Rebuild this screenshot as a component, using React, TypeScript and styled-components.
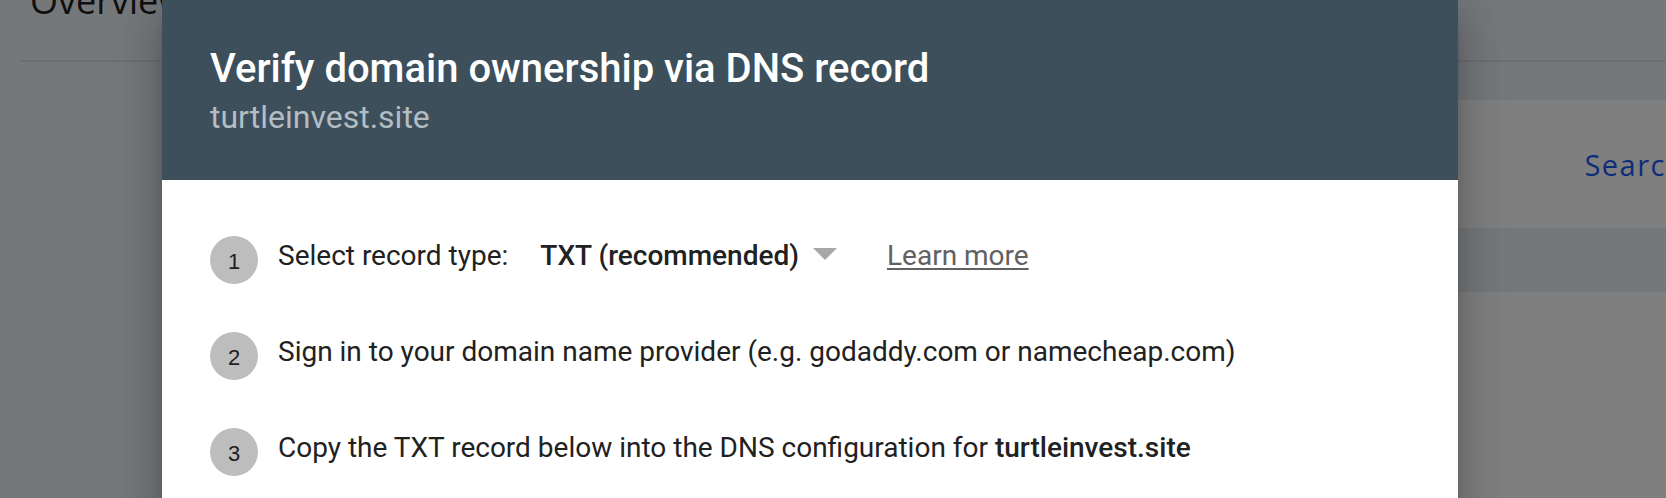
import React from "react";
import styled, { createGlobalStyle } from "styled-components";

const GlobalStyle = createGlobalStyle`
  html, body {
    margin: 0;
    padding: 0;
    width: 1666px;
    height: 498px;
    overflow: hidden;
    background: #eaf0f6;
  }
  * { box-sizing: border-box; }
`;

const Page = styled.div`
  position: relative;
  width: 1666px;
  height: 498px;
  overflow: hidden;
  background: #eaf0f6;
  font-family: "Open Sans", Roboto, sans-serif;
`;

const PageHeader = styled.header`
  display: flow-root;
  height: 62px;
  margin-left: 20px;
  border-bottom: 2px solid #d8dce2;
`;

const PageTitle = styled.h1`
  margin: -19px 0 0 10px;
  font-family: "Open Sans", sans-serif;
  font-weight: 400;
  font-size: 36px;
  line-height: 40px;
  color: #1f1f1f;
`;

const Main = styled.main`
  display: flex;
  flex-direction: column;
  gap: 64px;
  padding: 38px 0 0 260px;
  width: calc(100% + 180px);
`;

const Card = styled.section<{ $h: number }>`
  display: flex;
  align-items: center;
  justify-content: space-between;
  height: ${(p) => p.$h}px;
  padding: 0 50px 0 32px;
  background: #ffffff;
`;

const CardTitle = styled.span`
  font-size: 28px;
  color: #202124;
`;

const CardLink = styled.a`
  font-family: "Open Sans", sans-serif;
  font-weight: 500;
  font-size: 29px;
  letter-spacing: 1.5px;
  color: #1a5af0;
  text-decoration: none;
`;

const Scrim = styled.div`
  position: absolute;
  inset: 0;
  background: rgba(0, 0, 0, 0.5);
`;

const Dialog = styled.div`
  position: absolute;
  top: 0;
  left: 162px;
  width: 1296px;
  height: 700px;
  background: #ffffff;
  box-shadow: 0 11px 15px -7px rgba(0, 0, 0, 0.2),
    0 24px 38px 3px rgba(0, 0, 0, 0.14), 0 9px 46px 8px rgba(0, 0, 0, 0.12);
  font-family: Roboto, "Liberation Sans", sans-serif;
`;

const DialogHeader = styled.div`
  display: flex;
  flex-direction: column;
  gap: 4px;
  height: 180px;
  padding: 45px 48px 0;
  background: #3d4f5a;
`;

const DialogTitle = styled.h2`
  margin: 0;
  font-weight: 500;
  font-size: 40px;
  line-height: 48px;
  color: #ffffff;
`;

const DialogSubtitle = styled.div`
  font-weight: 400;
  font-size: 32px;
  line-height: 40px;
  color: #b3bdc4;
`;

const Steps = styled.ol`
  display: flex;
  flex-direction: column;
  gap: 48px;
  margin: 0;
  padding: 56px 48px 0;
  list-style: none;
`;

const Step = styled.li`
  display: flex;
  align-items: flex-start;
  gap: 20px;
`;

const StepNumber = styled.span`
  flex: none;
  display: flex;
  align-items: center;
  justify-content: center;
  width: 48px;
  height: 48px;
  padding-top: 4px;
  border-radius: 50%;
  background: #bdbdbd;
  font-family: "Liberation Sans", Arial, sans-serif;
  font-size: 22px;
  color: #212121;
`;

const StepText = styled.div`
  display: flex;
  align-items: center;
  font-size: 28px;
  line-height: 40px;
  color: #212121;
`;

const Strong = styled.b`
  font-weight: 500;
`;

const RecordSelect = styled.span`
  display: inline-flex;
  align-items: center;
  gap: 14px;
  margin-left: 32px;
  font-weight: 500;
`;

const Caret = styled.span`
  width: 0;
  height: 0;
  margin-top: -4px;
  border-left: 12px solid transparent;
  border-right: 12px solid transparent;
  border-top: 12px solid #a8a8a8;
`;

const LearnMore = styled.a`
  margin-left: 50px;
  color: #616161;
  text-decoration: underline;
  text-underline-offset: 3px;
`;

export default function App() {
  return (
    <>
      <GlobalStyle />
      <Page>
        <PageHeader>
          <PageTitle>Overview</PageTitle>
        </PageHeader>
        <Main>
          <Card $h={128}>
            <CardTitle>Performance</CardTitle>
            <CardLink>Search results</CardLink>
          </Card>
          <Card $h={300}>
            <CardTitle>Indexing</CardTitle>
          </Card>
        </Main>
        <Scrim />
        <Dialog role="dialog">
          <DialogHeader>
            <DialogTitle>Verify domain ownership via DNS record</DialogTitle>
            <DialogSubtitle>turtleinvest.site</DialogSubtitle>
          </DialogHeader>
          <Steps>
            <Step>
              <StepNumber>1</StepNumber>
              <StepText>
                Select record type:
                <RecordSelect>
                  TXT (recommended)
                  <Caret />
                </RecordSelect>
                <LearnMore>Learn more</LearnMore>
              </StepText>
            </Step>
            <Step>
              <StepNumber>2</StepNumber>
              <StepText>
                Sign in to your domain name provider (e.g. godaddy.com or namecheap.com)
              </StepText>
            </Step>
            <Step>
              <StepNumber>3</StepNumber>
              <StepText>
                <span>
                  Copy the TXT record below into the DNS configuration for{" "}
                  <Strong>turtleinvest.site</Strong>
                </span>
              </StepText>
            </Step>
          </Steps>
        </Dialog>
      </Page>
    </>
  );
}
